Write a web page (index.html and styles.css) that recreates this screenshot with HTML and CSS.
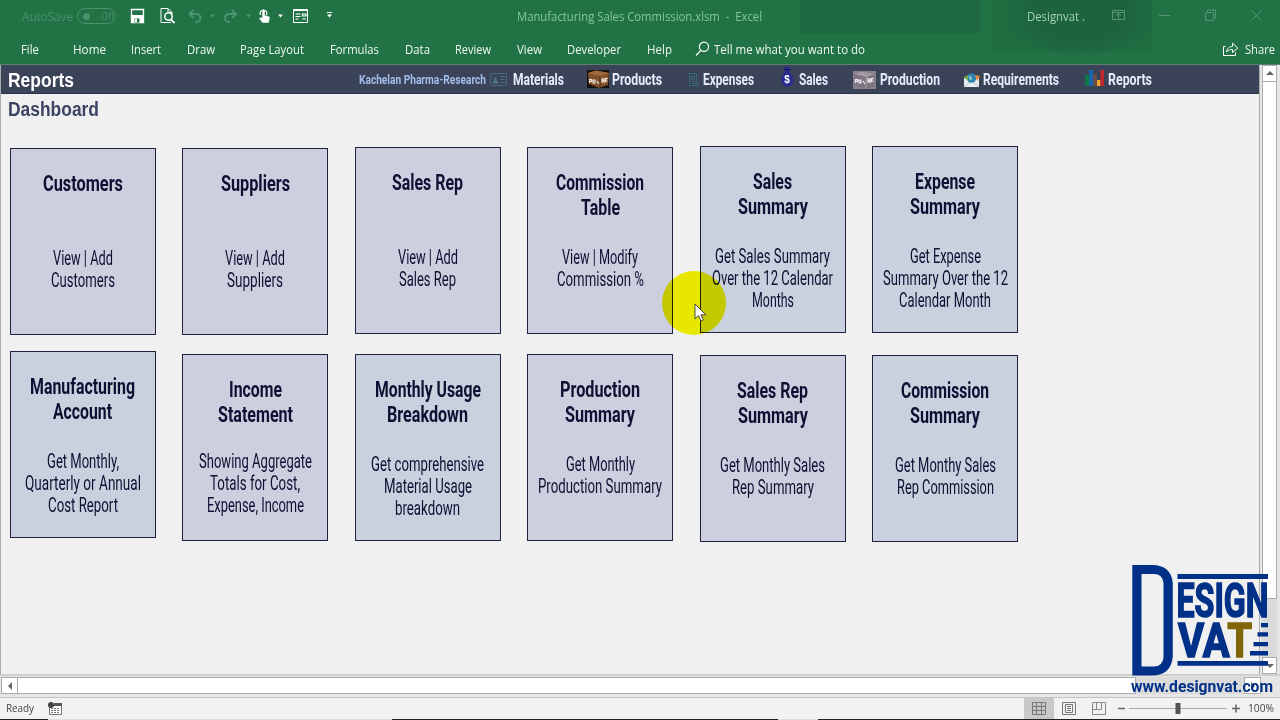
FILE: index.html
```
<!DOCTYPE html>
<html lang="en">

<head>
  <meta charset="UTF-8" />
  <title>Manufacturing Sales Commission.xlsm - Excel</title>
  <link rel="stylesheet" href="styles.css">
</head>

<body>

  <header class="ribbon">
    <div class="titlebar">
      <div class="autosave">
        <span data-w="51">AutoSave</span>
        <div class="switch"><i></i><span data-w="13">Off</span></div>
      </div>
      <div class="quick">
        <svg width="210" height="32" viewBox="130 0 210 32" fill="none" stroke="#fff">
          <!-- save -->
          <path d="M131.5 9.5h12v13h-12z" stroke-width="1.4" />
          <path d="M131.5 15.5h12v7h-12z" fill="#fff" />
          <path d="M134.5 18.5h5v4h-5z" fill="#217346" stroke="none" />
          <path d="M135 19h2v3h-2z" fill="#fff" stroke="none" />
          <!-- print preview -->
          <path d="M171 22.5h-10v-14h7l4 4v2M168 8.5v4h4" />
          <circle cx="168.5" cy="16.5" r="3.7" stroke-width="1.5" />
          <path d="M171 19.5l3.5 3.5" stroke-width="2" />
          <!-- undo / redo -->
          <g stroke="#4c9670" stroke-width="2">
            <path d="M193.5 10l-4 4 4 4M190 14h6.5a4 4 0 0 1 0 8h-1" />
            <path d="M232 10l4 4-4 4M236 14h-7a4 4 0 0 0 0 8h1" />
          </g>
          <path d="M210 14.5h5l-2.5 3zM246 14.5h5l-2.5 3z" fill="#4c9670" stroke="none" />
          <!-- touch -->
          <path d="M260.5 15a3.4 3.4 0 1 1 6 0" stroke-width="1.2" />
          <path d="M262.5 22.5l-3-4 1.2-1 1.8 1.3V11c0-1.2 2-1.2 2 0v4.5l4 1c.8.3 1 1 .8 2l-.8 4z" fill="#fff" stroke-width=".5" />
          <path d="M278 14.5h5l-2.5 3z" fill="#fff" stroke="none" />
          <!-- form -->
          <path d="M293.5 9.5h14v13h-14z" />
          <path d="M293 10.5h15M295.5 14h5M295.5 16.5h5M295.5 19h3M302.5 14h3.5v2h-3.5zM302.5 19h3.5" stroke-width="1.2" />
          <path d="M327 12.5h5" />
          <path d="M327 14.5h5l-2.5 3z" fill="#fff" stroke="none" />
        </svg>
      </div>
      <div class="filename"><span data-w="245">Manufacturing Sales Commission.xlsm&nbsp; -&nbsp; Excel</span></div>
      <div class="user"><span data-w="58">Designvat .</span></div>
      <svg width="170" height="32" viewBox="1110 0 170 32" fill="none" stroke="#579575">
        <path d="M1112.5 10.5h12v9h-12zM1112 12.5h13M1118.5 18.5v-5M1116 16l2.5-2.5 2.5 2.5" />
        <path d="M1159 15.5h11" />
        <path d="M1205.5 12.5h8v8h-8zM1207.5 12v-2h8v8h-2" />
        <path d="M1251.5 10.5l10 10M1261.5 10.5l-10 10" />
      </svg>
    </div>
    <nav class="tabs">
      <span data-w="18">File</span>
      <span data-w="33">Home</span>
      <span data-w="30">Insert</span>
      <span data-w="28">Draw</span>
      <span data-w="64">Page Layout</span>
      <span data-w="49">Formulas</span>
      <span data-w="25">Data</span>
      <span data-w="36">Review</span>
      <span data-w="25">View</span>
      <span data-w="54">Developer</span>
      <span data-w="25">Help</span>
      <div class="tell">
        <svg width="15" height="16" viewBox="0 0 15 16" fill="none" stroke="#fff" stroke-width="1.2">
          <circle cx="9" cy="5.8" r="4.6" />
          <path d="M5.8 9.3L1 14.5" />
        </svg>
        <span data-w="151">Tell me what you want to do</span>
      </div>
      <div class="share">
        <svg width="17" height="16" viewBox="0 0 17 16" fill="none" stroke="#fff">
          <path d="M3.5 5.5h-2v9h12v-3" />
          <path d="M4.5 11c.5-4 3-5.5 6-5.5v-3.3l5.3 4.8-5.3 4.5v-3c-2.5 0-4 .5-6 2.5z" />
        </svg>
        <span data-w="30">Share</span>
      </div>
    </nav>
  </header>

  <main class="workspace">
    <section class="sheet">
      <div class="menubar">
        <h1><span data-w="66">Reports</span></h1>
        <div class="company"><span data-w="127">Kachelan Pharma-Research</span></div>
        <div class="item">
          <svg width="23" height="26" viewBox="0 0 23 26" fill="none" stroke="#4b6a80">
            <rect x=".5" y="7.5" width="16" height="12" rx="1" />
            <path d="M10 10.5h5M10 13.5h5M10 16.5h5" />
            <path d="M3 17.5h5v-2l-1.5-1v-3h-2v3l-1.5 1z" fill="#4f7890" stroke="none" />
          </svg>
          <span data-w="51">Materials</span>
        </div>
        <div class="item">
          <svg width="25" height="26" viewBox="0 0 25 26">
            <path d="M0 4h22v18H0z" fill="#17110e" />
            <path d="M1 7l8-2.500L22 7l-1 12-9 3-10-4z" fill="#80502c" />
            <path d="M1 7l8-2.500L22 7l-9 3z" fill="#a06a3d" />
            <path d="M13 10v12" stroke="#4a2912" />
            <path d="M2.5 13v4M2.5 13.5h2v2h-2M6 14v3h2v-3zM10 15l2 3M15 17v-4l2 3v-4M18.5 12v3.5l2-.5M18.5 13.5l2-1.5" fill="none" stroke="#f0e5db" stroke-width="1.2" />
          </svg>
          <span data-w="50">Products</span>
        </div>
        <div class="item">
          <svg width="16" height="26" viewBox="0 0 16 26" fill="none" stroke="#356978">
            <path d="M.5 7.5h9v9.5M2.5 8v11.5h9v-2H5M4.5 10.5h3v3h-3zM4.5 15.5h4" />
          </svg>
          <span data-w="51">Expenses</span>
        </div>
        <div class="item">
          <svg width="18" height="28" viewBox="0 0 18 28">
            <path d="M3 2h6l-1 5c6 4 6 14-2 15-7-1-7-11-2-15z" fill="#292b91" />
            <path d="M2.5 4.5h7" stroke="#15184d" />
            <text x="3.2" y="17.5" class="coin">$</text>
          </svg>
          <span data-w="29">Sales</span>
        </div>
        <div class="item">
          <svg width="27" height="26" viewBox="0 0 27 26">
            <path d="M0 5h23v18H0z" fill="#887f8c" />
            <path d="M1 8l8-2.5L22 8l-1 12-9 3-10-4z" fill="#7d7380" />
            <path d="M1 8l8-2.5L22 8l-9 3z" fill="#a39aa3" />
            <path d="M13 11v12" stroke="#a69ea8" />
            <path d="M2.5 13v4M2.5 13.5h2v2h-2M6 14v3h2v-3zM10 15l2 3M15 17v-4l2 3v-4M18.5 12v3.5l2-.5M18.5 13.5l2-1.5" fill="none" stroke="#eee" stroke-width="1.2" />
          </svg>
          <span data-w="60">Production</span>
        </div>
        <div class="item">
          <svg width="20" height="26" viewBox="0 0 20 26">
            <path d="M1 11h15v10H1z" fill="#e9eef2" />
            <path d="M1 21l7.5-6 7.5 6" fill="none" stroke="#b9c5ce" />
            <circle cx="8.5" cy="12" r="4.8" fill="#2f83ae" />
            <path d="M5.5 9.5l3 1 1 3-3 1z" fill="#75c0cc" />
            <path d="M0 12l5-3v5z" fill="#78a94b" />
            <path d="M17 10l-5-1 2 6z" fill="#e48c39" />
          </svg>
          <span data-w="76">Requirements</span>
        </div>
        <div class="item">
          <svg width="23" height="26" viewBox="0 0 23 26">
            <path d="M0 9h4v11H0z" fill="#0d7a45" />
            <path d="M4 4h4v16H4z" fill="#1965ae" />
            <path d="M8 8h4v12H8z" fill="#67504a" />
            <path d="M12 14h3.5v6H12z" fill="#f2a52c" />
            <path d="M15.5 4H19v16h-3.5z" fill="#c3272e" />
          </svg>
          <span data-w="44">Reports</span>
        </div>
      </div>

      <h2><span data-w="91">Dashboard</span></h2>

      <div class="cards">
        <div class="card drop2">
          <h3><span data-w="80">Customers</span></h3>
          <p><span data-w="60">View | Add</span><br><span data-w="64">Customers</span></p>
        </div>
        <div class="card drop2">
          <h3><span data-w="69">Suppliers</span></h3>
          <p><span data-w="60">View | Add</span><br><span data-w="56">Suppliers</span></p>
        </div>
        <div class="card drop1">
          <h3><span data-w="71">Sales Rep</span></h3>
          <p><span data-w="60">View | Add</span><br><span data-w="57">Sales Rep</span></p>
        </div>
        <div class="card drop1">
          <h3><span data-w="88">Commission</span><br><span data-w="39">Table</span></h3>
          <p><span data-w="76">View | Modify</span><br><span data-w="87">Commission %</span></p>
        </div>
        <div class="card blue">
          <h3><span data-w="39">Sales</span><br><span data-w="70">Summary</span></h3>
          <p><span data-w="115">Get Sales Summary</span><br><span data-w="121">Over the 12 Calendar</span><br><span data-w="42">Months</span></p>
        </div>
        <div class="card blue">
          <h3><span data-w="60">Expense</span><br><span data-w="70">Summary</span></h3>
          <p><span data-w="71">Get Expense</span><br><span data-w="125">Summary Over the 12</span><br><span data-w="92">Calendar Month</span></p>
        </div>

        <div class="card blue">
          <h3><span data-w="105">Manufacturing</span><br><span data-w="59">Account</span></h3>
          <p><span data-w="72">Get Monthly,</span><br><span data-w="116">Quarterly or Annual</span><br><span data-w="70">Cost Report</span></p>
        </div>
        <div class="card drop3 tight">
          <h3><span data-w="53">Income</span><br><span data-w="75">Statement</span></h3>
          <p><span data-w="113">Showing Aggregate</span><br><span data-w="90">Totals for Cost,</span><br><span data-w="97">Expense, Income</span></p>
        </div>
        <div class="card blue drop3">
          <h3><span data-w="106">Monthly Usage</span><br><span data-w="81">Breakdown</span></h3>
          <p><span data-w="113">Get comprehensive</span><br><span data-w="88">Material Usage</span><br><span data-w="65">breakdown</span></p>
        </div>
        <div class="card drop3">
          <h3><span data-w="80">Production</span><br><span data-w="70">Summary</span></h3>
          <p><span data-w="69">Get Monthly</span><br><span data-w="124">Production Summary</span></p>
        </div>
        <div class="card drop4">
          <h3><span data-w="71">Sales Rep</span><br><span data-w="70">Summary</span></h3>
          <p><span data-w="105">Get Monthly Sales</span><br><span data-w="82">Rep Summary</span></p>
        </div>
        <div class="card blue drop4">
          <h3><span data-w="88">Commission</span><br><span data-w="70">Summary</span></h3>
          <p><span data-w="101">Get Monthy Sales</span><br><span data-w="97">Rep Commission</span></p>
        </div>
      </div>
    </section>

    <aside class="vscroll">
      <div class="btn up"></div>
      <div class="thumb"></div>
      <div class="btn down"></div>
    </aside>
  </main>

  <div class="hscroll">
    <div class="btn left"></div>
    <div class="thumb"></div>
    <div class="btn right"></div>
  </div>

  <footer class="status">
    <span data-w="28">Ready</span>
    <svg class="macro" width="15" height="14" viewBox="0 0 15 14">
      <path d="M1.5 3.5h12v9h-12z" fill="#fff" stroke="#777" />
      <path d="M6 1h8v3H6z" fill="#555" />
      <path d="M3 6.5h9M3 8.5h9M3 10.5h9" stroke="#777" stroke-dasharray="2 1" />
      <circle cx="3" cy="3" r="3" fill="#444" />
    </svg>
    <div class="views">
      <div class="view on">
        <svg width="14" height="14" fill="none" stroke="#777"><path d="M.5.5h13v12H.5zM4.5 0v13M9.5 0v13M0 4.5h14M0 8.5h14" /></svg>
      </div>
      <div class="view">
        <svg width="14" height="14" fill="none" stroke="#777"><path d="M.5.5h13v12H.5zM3.5 2.5h7v8h-7zM5 4.5h4M5 6.5h4M5 8.5h4" /></svg>
      </div>
      <div class="view">
        <svg width="14" height="14" fill="none" stroke="#888"><path d="M.5.5h13v12H.5zM.5 7.5h9v-7M4.5.5v7" /></svg>
      </div>
    </div>
    <svg class="zoom" width="124" height="21" viewBox="0 0 124 21" stroke="#666">
      <path d="M1 10.5h7M115 10.5h8M119 6.5v8" stroke-width="1.6" />
      <path d="M12 10.5h98" stroke="#aaa" />
      <path d="M58.5 5h5v11h-5z" fill="#555" stroke="none" />
    </svg>
    <span data-w="26">100%</span>
  </footer>
  <div class="edge"><i></i><i></i></div>

  <!-- pointer with click highlight -->
  <div class="halo"></div>
  <svg class="pointer" width="14" height="20" viewBox="0 0 14 20">
    <path d="M1 1v15l3.5-3.3 2.4 5.3 2.5-1.1-2.4-5.1h4.8z" fill="#fff" stroke="#333" stroke-width=".9" />
  </svg>

  <svg class="logo" width="150" height="140" viewBox="0 0 150 140">
    <path fill-rule="evenodd" d="M2.3 2H22q19 0 20.800 18v73.500Q41 112.500 22 112.500H2.300zM11.500 11v92.500H24q8.500 0 9.500-9V20q-1-9-9.500-9z" />
    <path d="M47.5 11h90.5v5H47.5zM47.5 98h90.5v4.800H47.5z" />
    <path d="M131 60h7v4.2h-7zM127.5 69.3H138v4.3h-10.5zM123.5 79H138v4.3h-14.5zM120 88h18v4.5h-18z" />
    <text x="46.5" y="54.3" class="big" textLength="92" lengthAdjust="spacingAndGlyphs">ESIGN</text>
    <text x="48" y="93.5" class="big" textLength="74" lengthAdjust="spacingAndGlyphs">VA<tspan class="gold">T</tspan></text>
    <text x="1" y="128.5" class="site" textLength="142" lengthAdjust="spacingAndGlyphs">www.designvat.com</text>
  </svg>

  <script>
    // squeeze each label to its column width
    document.querySelectorAll("[data-w]").forEach(function (el) {
      const w = Number(el.dataset.w);
      const natural = el.getBoundingClientRect().width;
      el.style.transform = `scaleX(${w / natural})`;
      el.style.marginRight = `${w - natural}px`;
    });
  </script>

</body>

</html>
```
FILE: styles.css
```
* {
  box-sizing: border-box;
}
body {
  margin: 0;
  width: 1280px;
  height: 720px;
  overflow: hidden;
  position: relative;
  background: #e6e6e6;
  font-family: "Open Sans", "Noto Sans", sans-serif;
  font-size: 12px;
}
h1, h2, h3, p {
  margin: 0;
}
svg {
  display: block;
  flex: none;
}
[data-w] {
  display: inline-block;
  flex: none;
  white-space: nowrap;
  transform-origin: 0 50%;
}

/* ribbon */
.ribbon {
  height: 65px;
  border-bottom: 1px solid #5c7f71;
  color: #eef7f0;
  background:
    radial-gradient(ellipse 75px 46px at 1080px 12px, #1d643d 60%, transparent),
    linear-gradient(#1e693f, #1e693f) 800px 0 / 180px 33px no-repeat,
    linear-gradient(#1f6c41, #1f6c41) 992px 0 / 160px 51px no-repeat,
    #217346;
}
.titlebar {
  display: grid;
  grid-template-columns: 108px 387px 510px 83px 170px;
  height: 32px;
  padding-left: 22px;
  align-items: center;
}
.autosave {
  display: flex;
  align-items: center;
  gap: 4px;
  color: #4b916a;
}
.switch {
  display: flex;
  align-items: center;
  gap: 11px;
  width: 39px;
  height: 16px;
  padding-left: 5px;
  border: 1px solid #4b916a;
  border-radius: 8px;
  font-size: 10px;
}
.switch i {
  width: 7px;
  height: 7px;
  border-radius: 50%;
  background: #4b916a;
}
.filename {
  color: #86c69c;
}
.user {
  color: #a3d0b3;
}
.tabs {
  display: flex;
  align-items: center;
  gap: 25.6px;
  height: 32px;
  padding-left: 21px;
  padding-top: 2px;
  font-size: 12.5px;
}
.tabs > span:nth-child(2) {
  margin-left: 8px;
}
.tell {
  display: flex;
  align-items: center;
  gap: 4px;
  margin-left: -3px;
}
.share {
  display: flex;
  align-items: center;
  gap: 6px;
  margin-left: auto;
  margin-right: 5px;
}

/* worksheet */
.workspace {
  display: flex;
  height: 611px;
  border-bottom: 2px solid #cfcfcf;
}
.sheet {
  width: 1259px;
  background: #f0f0f1;
  border-left: 1px solid #a9a9ae;
}
.menubar {
  display: grid;
  grid-template-columns: 351px 131px 97px 100px 94px 72px 110px 122px 100px;
  grid-template-rows: 28px;
  height: 29px;
  padding-left: 7px;
  overflow: hidden;
  align-items: center;
  background: #3b4359;
  border-bottom: 1px solid #2b3148;
  font-family: Roboto, sans-serif;
  font-weight: bold;
  color: #e6ecfa;
}
h1, h2 {
  font-family: "Liberation Sans", Arial, sans-serif;
  font-size: 20px;
  line-height: 30px;
}
h1 {
  padding-top: 2px;
  color: #fff;
}
h2 {
  height: 52px;
  padding-left: 7px;
  color: #3d4363;
}
.company {
  font-size: 12.5px;
  color: #a5bdea;
}
.item {
  display: flex;
  align-items: center;
  height: 28px;
  font-size: 16.5px;
}
.coin {
  font: bold 10px "Liberation Sans", sans-serif;
  fill: #fff;
}
.cards {
  display: grid;
  grid-template-columns: repeat(6, 146px);
  grid-auto-rows: 205px;
  column-gap: 26.5px;
  padding-left: 8.5px;
  font-family: Roboto, sans-serif;
  text-align: center;
  color: #0d1032;
}
.card {
  height: 187px;
  padding-top: 22px;
  background: #cdcfde;
  border: 1px solid #20233f;
}
.card.blue {
  background: #cad1de;
}
.card h3 {
  height: 76px;
  font-size: 22px;
  line-height: 25.4px;
}
.card p {
  font-size: 20px;
  line-height: 22px;
}
.tight h3 {
  height: 73px;
}
.drop1 {
  margin-top: 1px;
}
.drop2 {
  margin-top: 2px;
}
.drop3 {
  margin-top: 3px;
}
.drop4 {
  margin-top: 4px;
}

/* scroll bars */
.vscroll {
  display: flex;
  flex-direction: column;
  width: 21px;
  padding: 0 3px 0 2px;
  border-left: 1px solid #ababab;
}
.vscroll .btn {
  height: 17px;
}
.vscroll .thumb {
  height: 518px;
  margin-bottom: 58px;
  border-top: 0;
  box-shadow: 0 58px #dadada;
}
.btn, .thumb {
  display: flex;
  align-items: center;
  justify-content: center;
  background: #fff;
  border: 1px solid #ababab;
}
.btn::before {
  content: "";
  border: 4px solid transparent;
}
.up::before {
  border-top: 0;
  border-bottom-color: #666;
}
.down::before {
  border-bottom: 0;
  border-top-color: #666;
}
.left::before {
  border-left: 0;
  border-right-color: #666;
}
.right::before {
  border-right: 0;
  border-left-color: #666;
}
.hscroll {
  display: flex;
  height: 22px;
  padding: 1px 0 3px 1px;
  border-bottom: 1px solid #c4c4c4;
}
.hscroll .btn {
  width: 17px;
}
.hscroll .thumb {
  width: 1119px;
  margin-left: -1px;
  margin-right: 108px;
  box-shadow: 108px 0 #dadada;
}

/* status bar */
.status {
  display: flex;
  align-items: center;
  height: 21px;
  padding-left: 6px;
  background: #f2f2f2;
  color: #444;
  font-size: 11.5px;
}
.status > span {
  padding-bottom: 2px;
}
.macro {
  margin-left: 14px;
}
.views {
  display: flex;
  margin-left: 961px;
}
.view {
  display: flex;
  align-items: center;
  justify-content: center;
  width: 30px;
  height: 21px;
}
.view.on {
  background: #c8c8c8;
}
.zoom {
  margin: 0 7px 0 3px;
}
.edge {
  display: flex;
  height: 1px;
  padding-left: 48px;
  gap: 386px;
  background: #202126;
}
.edge i {
  width: 344px;
  background: #ddd;
}
.edge i + i {
  width: 40px;
}

/* overlays */
.halo {
  position: absolute;
  left: 662px;
  top: 271px;
  width: 64px;
  height: 64px;
  border-radius: 50%;
  background: #f6f600;
  mix-blend-mode: multiply;
}
.pointer {
  position: absolute;
  left: 694px;
  top: 303px;
}
.logo {
  position: absolute;
  left: 1130px;
  top: 563px;
  fill: #003087;
  font-family: Roboto, sans-serif;
  font-weight: bold;
}
.big {
  font-size: 48px;
  stroke: #003087;
  stroke-width: 1.6px;
}
.gold {
  fill: #80650a;
  stroke: #80650a;
}
.site {
  font-size: 16.5px;
}
```
